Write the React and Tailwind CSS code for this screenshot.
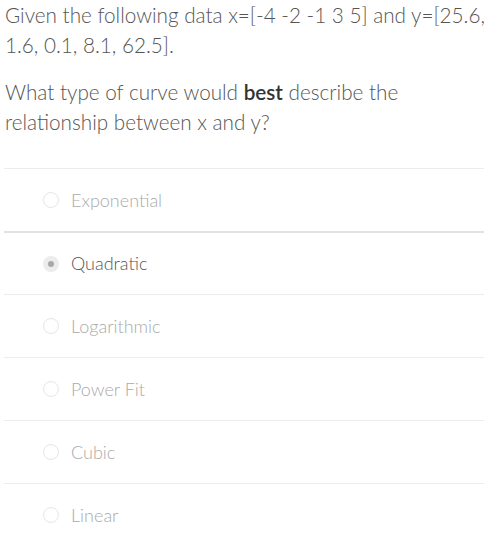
import React from "react";

const options = ["Exponential", "Quadratic", "Logarithmic", "Power Fit", "Cubic", "Linear"];

function Radio({ checked }) {
  return checked ? (
    <span className="flex h-[16px] w-[16px] shrink-0 items-center justify-center rounded-full bg-[#ececec]">
      <span className="h-[6px] w-[6px] rounded-full bg-[#a8a8a8]" />
    </span>
  ) : (
    <span className="h-[16px] w-[16px] shrink-0 rounded-full border border-[#e6e6e6] bg-white" />
  );
}

export default function App() {
  return (
    <div className="w-[494px] min-h-[551px] bg-white font-['Lato','Noto_Sans',sans-serif] font-light">
      <div className="pl-[5px] pr-[6px] text-[20.7px] leading-[30px] text-[#555]">
        <p className="mb-[17px]">Given the following data x=[-4 -2 -1 3 5] and y=[25.6, 1.6, 0.1, 8.1, 62.5].</p>
        <p>
          What type of curve would <b className="font-semibold text-[#333]">best</b> describe the relationship between x and y?
        </p>
      </div>
      <ul className="ml-[4px] mt-[31px] w-[480px]">
        {options.map((o, i) => (
          <li
            key={o}
            className={`flex h-[63px] items-center gap-[12px] pl-[39px] ${i === 1 ? "border-t-2 border-[#e2e2e2]" : "border-t border-[#ececec]"}`}
          >
            <Radio checked={i === 1} />
            <span className={`text-[18px] ${i === 1 ? "text-[#555]" : "text-[#aaa]"}`}>{o}</span>
          </li>
        ))}
      </ul>
    </div>
  );
}
